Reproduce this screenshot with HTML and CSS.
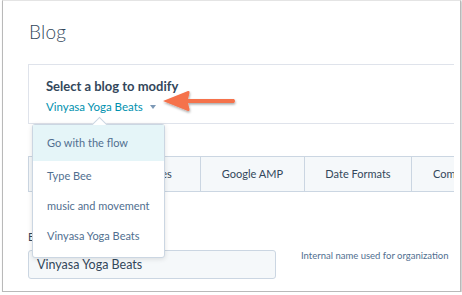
FILE: index.html
```html
<!DOCTYPE html>
<html>
<head>
  <meta name="viewport" content="width=device-width, initial-scale=1">
  <title>Blog Settings</title>
  <link rel="stylesheet" href="styles.css">
</head>
<body>
  <div class="frame">
    <h1 class="page-title">Blog</h1>

    <div class="content">
      <div class="blog-picker">
        <div class="picker-label">Select a blog to modify</div>
        <div class="picker-value">Vinyasa Yoga Beats <span class="caret"></span></div>
      </div>

      <div class="tabs">
        <div class="tab tab-general">General</div>
        <div class="tab tab-templates">Templates</div>
        <div class="tab tab-amp">Google AMP</div>
        <div class="tab tab-dates">Date Formats</div>
        <div class="tab tab-comments">Comments</div>
      </div>

      <div class="field">
        <div class="field-label">Blog name</div>
        <div class="field-row">
          <div class="text-input">Vinyasa Yoga Beats</div>
          <div class="field-help">Internal name used for organization</div>
        </div>
      </div>
    </div>

    <div class="dropdown">
      <div class="dropdown-item active">Go with the flow</div>
      <div class="dropdown-item">Type Bee</div>
      <div class="dropdown-item">music and movement</div>
      <div class="dropdown-item">Vinyasa Yoga Beats</div>
    </div>

    <svg class="callout-arrow" width="80" height="30" viewBox="0 0 80 30">
      <defs>
        <filter id="arrow-shadow" x="-20%" y="-30%" width="140%" height="170%">
          <feDropShadow dx="0.5" dy="1.5" stdDeviation="1.2" flood-color="#000" flood-opacity="0.35"/>
        </filter>
      </defs>
      <g filter="url(#arrow-shadow)" fill="#f5724c">
        <path d="M3 12 L28 2 Q30 1.5 29.5 4 L28 10 L74 10 Q76 12 74 14 L28 14 L29.5 20 Q30 22.5 28 22 Z"/>
      </g>
    </svg>
  </div>
</body>
</html>
```

FILE: styles.css
```css
body {
  margin: 0;
  background: white;
  font-family: Lato, "Open Sans", sans-serif;
  color: #33475b;
}

.frame {
  position: relative;
  margin-left: 2px;
  width: 457px;
  height: 290px;
  border: 1px solid #b9b9b9;
  border-top-color: #e4e4e4;
  box-shadow: 1px 1px 2px rgba(0,0,0,0.25);
  background: white;
}

.page-title {
  margin: 0;
  padding: 19px 0 0 26px;
  font-size: 19px;
  font-weight: 300;
  line-height: 24px;
  letter-spacing: 0.2px;
}

.content {
  margin: 20px 0 0 25px;
  width: 426px;
  overflow: hidden;
}

.blog-picker {
  width: 460px;
  height: 60px;
  box-sizing: border-box;
  border: 1px solid #dfe3eb;
  border-right: none;
  padding: 13px 17px 0;
}

.picker-label {
  font-size: 13px;
  font-weight: 700;
  line-height: 17px;
}

.picker-value {
  margin-top: 4px;
  font-size: 11.5px;
  line-height: 15px;
  color: #0091ae;
}

.caret {
  display: inline-block;
  margin-left: 4px;
  vertical-align: 2px;
  border-left: 3px solid transparent;
  border-right: 3px solid transparent;
  border-top: 4px solid #7c98b6;
}

.tabs {
  display: flex;
  margin-top: 32px;
  width: 500px;
  height: 36px;
  box-sizing: border-box;
  border: 1px solid #cbd6e2;
  border-right: none;
  background: #f5f8fa;
}

.tab {
  flex: none;
  display: flex;
  align-items: center;
  justify-content: center;
  padding-bottom: 2px;
  box-sizing: border-box;
  border-right: 1px solid #cbd6e2;
  font-size: 11px;
  color: #33475b;
}

.tab-general { width: 66px; }
.tab-templates { width: 106px; }
.tab-amp { width: 104px; }
.tab-dates { width: 107px; }
.tab-comments { width: 100px; justify-content: flex-start; padding-left: 21px; }

.field {
  margin-top: 38px;
}

.field-label {
  font-size: 11px;
  line-height: 14px;
  margin-bottom: 6px;
}

.field-row {
  display: flex;
  align-items: flex-start;
}

.text-input {
  width: 248px;
  height: 29px;
  box-sizing: border-box;
  border: 1px solid #cbd6e2;
  border-radius: 3px;
  background: #f5f8fa;
  padding: 0 8px;
  font-size: 12.5px;
  line-height: 27px;
}

.field-help {
  margin-left: 25px;
  font-size: 9.5px;
  line-height: 12px;
  color: #516f90;
}

.dropdown {
  position: absolute;
  left: 29px;
  top: 123px;
  width: 133px;
  height: 134px;
  box-sizing: border-box;
  border: 1px solid #cbd6e2;
  border-radius: 3px;
  background: white;
  box-shadow: 0 1px 5px rgba(0,0,0,0.12);
}

.dropdown::before {
  content: "";
  position: absolute;
  left: 61px;
  top: -6px;
  width: 10px;
  height: 10px;
  background: white;
  border-left: 1px solid #cbd6e2;
  border-top: 1px solid #cbd6e2;
  transform: rotate(45deg);
}

.dropdown-item {
  position: relative;
  height: 30px;
  padding-left: 14px;
  font-size: 11px;
  line-height: 30px;
  color: #516f90;
}

.dropdown-item.active {
  height: 36px;
  line-height: 36px;
  background: #e5f5f8;
}

.callout-arrow {
  position: absolute;
  left: 157px;
  top: 88px;
}
```
